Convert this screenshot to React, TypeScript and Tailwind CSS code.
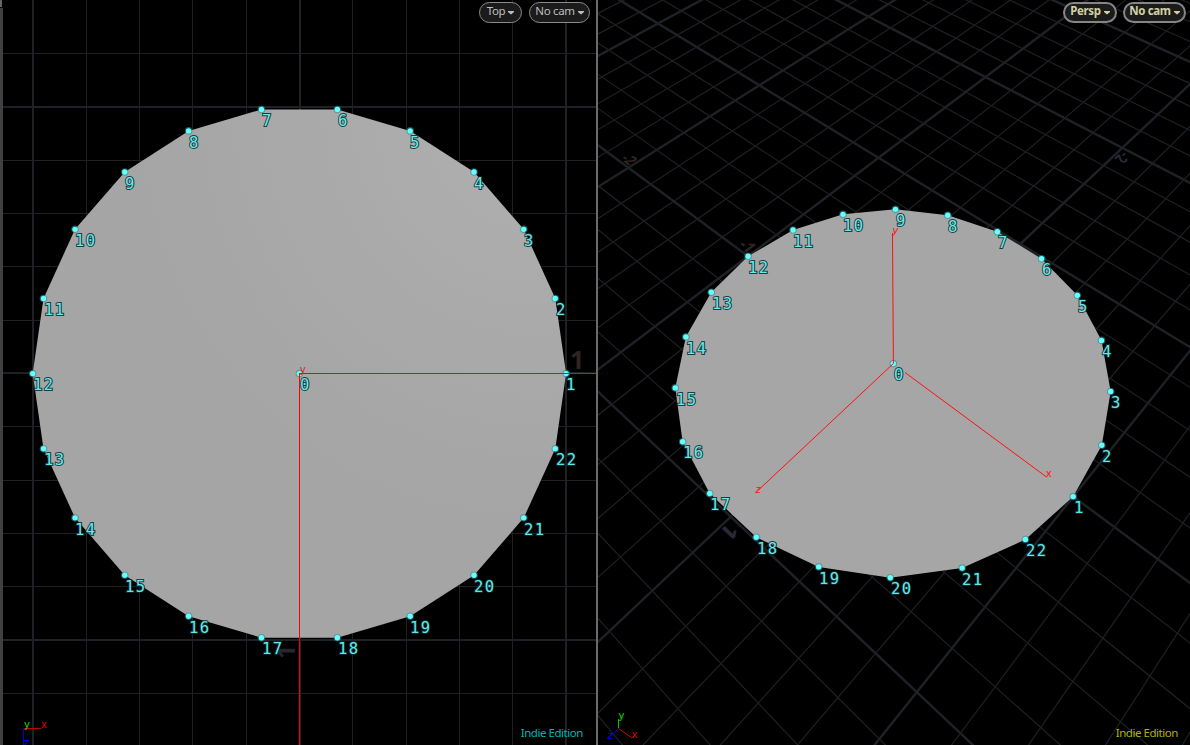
import type { ReactNode } from "react";

type Point = [number, number];
type Projection = (x: number, z: number) => Point;

interface GridLabel {
  text: string;
  x: number;
  z: number;
  rotate: number;
  color: string;
}

const DIVISIONS = 22;
const UNIT = 267;

const MAJOR_COLOR = "#1e2125";
const MINOR_COLOR = "#1e2024";

// Unit circle on the ground plane, point 0 is the center
const points: Point[] = [
  [0, 0],
  ...Array.from({ length: DIVISIONS }, (_, i): Point => {
    const angle = (i * 2 * Math.PI) / DIVISIONS;
    return [Math.cos(angle), -Math.sin(angle)];
  }),
];

const projectTop: Projection = (x, z) => [299.4 + x * (UNIT - 0.3), 373.6 + z * (UNIT - 0.2)];

const projectPersp: Projection = (x, z) => {
  const w = 1 - 0.1067 * x - 0.1228 * z;
  return [
    (65.4 * x - 252.3 * z + 893.3) / w,
    (80 * x + 89.7 * z + 363.6) / w,
  ];
};

const topColumns = [86, 139, 192, 246, 352, 406, 459, 512];
const topRows = [53, 160, 213, 266, 320, 426, 480, 533, 586, 693];
const topMajorColumns = [32, 299, 565];
const topMajorRows = [106, 372, 639];

const perspLabels: GridLabel[] = [
  { text: "-2", x: -2.055, z: -0.012, rotate: 0, color: "#342525" },
  { text: "-1", x: -1.055, z: -0.012, rotate: 0, color: "#342525" },
  { text: "1", x: 0.012, z: 1.045, rotate: 90, color: "#2b2a38" },
  { text: "-2", x: 0.012, z: -1.93, rotate: 90, color: "#2b2a38" },
];

// Five subdivisions for every unit of the ground grid
const gridSteps = Array.from({ length: 66 }, (_, i) => i - 50);

function PerspGrid() {
  const lines = gridSteps.flatMap((step) => {
    const k = step / 5;
    const major = step % 5 === 0;
    const near = 3;
    return [
      { key: `x${step}`, major, from: projectPersp(k, -10), to: projectPersp(k, near) },
      { key: `z${step}`, major, from: projectPersp(-10, k), to: projectPersp(near, k) },
    ];
  });

  return (
    <g>
      {lines.map(({ key, major, from, to }) => (
        <line
          key={key}
          x1={from[0]}
          y1={from[1]}
          x2={to[0]}
          y2={to[1]}
          stroke={major ? MAJOR_COLOR : MINOR_COLOR}
          strokeWidth={major ? 2.4 : 1.2}
        />
      ))}
      {perspLabels.map((label) => {
        const [u, v] = projectPersp(label.x, label.z);
        const [ux, vx] = projectPersp(label.x + 0.01, label.z);
        const [uz, vz] = projectPersp(label.x, label.z + 0.01);
        const s = 100 / UNIT;
        const m = [(ux - u) * s, (vx - v) * s, (uz - u) * s, (vz - v) * s, u, v];
        return (
          <text
            key={`${label.text}${label.z}`}
            transform={`matrix(${m.join(" ")}) rotate(${label.rotate})`}
            textAnchor="middle"
            fill={label.color}
            className="font-['Open_Sans',sans-serif] text-[25px] font-bold"
          >
            {label.text}
          </text>
        );
      })}
    </g>
  );
}

function TopGrid() {
  return (
    <g shapeRendering="crispEdges">
      {topColumns.map((x) => (
        <rect key={x} x={x} y={0} width={1} height={745} fill={MINOR_COLOR} />
      ))}
      {topRows.map((y) => (
        <rect key={y} x={3} y={y} width={593} height={1} fill={MINOR_COLOR} />
      ))}
      {topMajorColumns.map((x) => (
        <rect key={x} x={x} y={0} width={2} height={745} fill={MAJOR_COLOR} />
      ))}
      {topMajorRows.map((y) => (
        <rect key={y} x={3} y={y} width={593} height={2} fill={MAJOR_COLOR} />
      ))}
    </g>
  );
}

function Disc({ project, fill }: { project: Projection; fill: string }) {
  const outline = points.slice(1).map(([x, z]) => project(x, z).join(","));
  return <polygon points={outline.join(" ")} fill={fill} />;
}

function PointDots({ project }: { project: Projection }) {
  return (
    <g>
      {points.map(([x, z], i) => {
        const [cx, cy] = project(x, z);
        return (
          <g key={i}>
            <circle cx={cx} cy={cy} r={3.8} fill="#2f8f8f" fillOpacity={0.6} />
            <circle cx={cx} cy={cy} r={2.7} fill="#66ffff" />
          </g>
        );
      })}
    </g>
  );
}

function PointNumbers({ project }: { project: Projection }) {
  return (
    <g
      fill="#66ffff"
      fillOpacity={0.92}
      stroke="#102c30"
      strokeOpacity={0.9}
      strokeWidth={2}
      paintOrder="stroke"
      className="font-['DejaVu_Sans_Mono',monospace] text-[15.5px] tracking-[1.4px]"
    >
      {points.map(([x, z], i) => {
        const [px, py] = project(x, z);
        return (
          <text key={i} x={Math.round(px + 0.3)} y={Math.round(py + 16.7)}>
            {i}
          </text>
        );
      })}
    </g>
  );
}

function MenuPill({ label, active, className }: { label: string; active?: boolean; className: string }) {
  return (
    <button
      className={`flex h-[21px] items-center justify-center gap-[3px] rounded-full bg-[#1b1b1b] pb-[3px] text-[11.5px] leading-none tracking-[-0.35px] ${
        active
          ? "border-2 border-[#858585] font-bold text-[#d0d0a4]"
          : "border border-[#8a8a8a] text-[#bdbdbd]"
      } ${className}`}
    >
      {label}
      <svg width="6" height="4" viewBox="0 0 6 4" className="mt-[4px]">
        <path d="M0 0h6v1L3 3.5 0 1z" fill="currentColor" />
      </svg>
    </button>
  );
}

interface ViewportProps {
  viewBox: string;
  width: string;
  edition: string;
  pills: ReactNode;
  children: ReactNode;
}

function Viewport({ viewBox, width, edition, pills, children }: ViewportProps) {
  return (
    <section className={`relative flex h-full flex-col justify-between overflow-hidden bg-black ${width}`}>
      <svg viewBox={viewBox} className="absolute inset-0 h-full w-full">
        {children}
      </svg>
      <div className="relative flex justify-end pt-[2px]">{pills}</div>
      <div className={`relative pb-[4px] text-right text-[11.5px] leading-4 tracking-[-0.45px] ${edition}`}>
        Indie Edition
      </div>
    </section>
  );
}

function TopView() {
  return (
    <Viewport
      viewBox="3 0 593 745"
      width="w-[593px]"
      edition="pr-[13px] text-[#00b4b4]"
      pills={
        <div className="flex gap-[7px] pr-[6px]">
          <MenuPill label="Top" className="w-[43px]" />
          <MenuPill label="No cam" className="w-[61px]" />
        </div>
      }
    >
      <defs>
        <radialGradient id="shade" gradientUnits="userSpaceOnUse" cx="540" cy="120" r="400">
          <stop offset="0" stopColor="#b0b0b0" />
          <stop offset="0.5" stopColor="#aaaaaa" />
          <stop offset="1" stopColor="#a5a5a5" />
        </radialGradient>
      </defs>
      <TopGrid />
      <g className="font-['Open_Sans',sans-serif] text-[25px] font-bold">
        <text x={570} y={369} fill="#302424">1</text>
        <text transform="translate(295 659) rotate(-90)" fill="#262532">1</text>
      </g>
      <Disc project={projectTop} fill="url(#shade)" />
      <PointDots project={projectTop} />
      <g fill="#ff0000" shapeRendering="crispEdges">
        <rect x={299} y={373} width={297} height={1} />
        <rect x={299} y={373} width={1} height={372} />
      </g>
      <text x={300} y={373} fill="#f01818" className="font-['Liberation_Sans',sans-serif] text-[11px]">y</text>
      <PointNumbers project={projectTop} />

      {/* Axis gizmo */}
      <g shapeRendering="crispEdges">
        <rect x={23} y={728} width={1} height={17} fill="#0000d8" />
        <rect x={24} y={728} width={17} height={1} fill="#c80000" />
      </g>
      <g className="font-['DejaVu_Sans',sans-serif] text-[10px]">
        <text x={24} y={728} fill="#00e000">y</text>
        <text x={41} y={728} fill="#e00000">x</text>
        <text x={24} y={746} fill="#0000ff">z</text>
      </g>
    </Viewport>
  );
}

function PerspView() {
  return (
    <Viewport
      viewBox="598 0 592 745"
      width="w-[592px]"
      edition="pr-[12px] text-[#b4b400]"
      pills={
        <div className="flex gap-[6px] pr-[4px]">
          <MenuPill label="Persp" active className="w-[54px]" />
          <MenuPill label="No cam" active className="w-[63px]" />
        </div>
      }
    >
      <PerspGrid />
      <Disc project={projectPersp} fill="#a6a6a6" />
      <PointDots project={projectPersp} />
      <g stroke="#ff1010" strokeWidth={1}>
        <path d="M892.5 233L893.4 363.5L758.5 490" fill="none" />
        <path d="M905 372.5L1046.5 477" />
      </g>
      <g fill="#ff1010" className="font-['Liberation_Sans',sans-serif] text-[11px]">
        <text x={892.5} y={234} className="italic">y</text>
        <text x={1046} y={477}>x</text>
        <text x={755.5} y={492.5} className="italic">z</text>
      </g>
      <PointNumbers project={projectPersp} />

      {/* Axis gizmo */}
      <g fill="none">
        <path d="M618.5 728V719" stroke="#00c800" />
        <path d="M618.5 728.5L608 738.5" stroke="#0000e8" />
        <path d="M618.5 728.5L631.5 737.5H633" stroke="#d80000" />
      </g>
      <g className="font-['DejaVu_Sans',sans-serif] text-[10px]">
        <text x={618.5} y={719} fill="#00e000">y</text>
        <text x={631.5} y={738} fill="#e00000">x</text>
        <text x={607.5} y={739} fill="#0000f0" className="italic">z</text>
      </g>
    </Viewport>
  );
}

export default function App() {
  return (
    <main className="flex h-[745px] w-[1190px] overflow-hidden bg-black font-['Noto_Sans',sans-serif]">
      <div className="flex w-[3px] flex-col">
        <div className="h-[7px] w-[2px] bg-[#666666]" />
        <div className="h-px" />
        <div className="flex-1 bg-[#404040]" />
      </div>
      <TopView />
      <div className="w-[2px] bg-[#6b6b6b]" />
      <PerspView />
    </main>
  );
}
